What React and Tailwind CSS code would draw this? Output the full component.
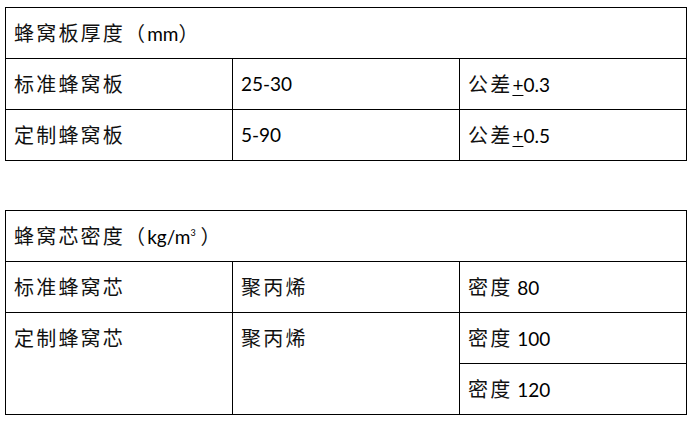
import React from 'react'

const FONT = "font-['Lato','Noto_Sans_CJK_SC',sans-serif]"

// CJK run — the source font sets Chinese wide and light
function Zh({ children }) {
  return <span className="text-[20px] tracking-[2.2px] text-[#111]">{children}</span>
}

function Cell({ children, top = false, span, rowSpan }) {
  return (
    <td
      colSpan={span}
      rowSpan={rowSpan}
      className={`border border-black pl-[8px] h-[51px] ${top ? 'align-top pt-[10px]' : 'align-middle'}`}
    >
      {children}
    </td>
  )
}

export default function App() {
  return (
    <div className={`w-[695px] h-[422px] bg-white text-black text-[19px] ${FONT}`}>
      <div className="pl-[5px] pt-[7px]">
        {/* ── 蜂窝板厚度 ───────────────────────────── */}
        <table className="border-collapse table-fixed w-[681px]">
          <colgroup>
            <col className="w-[227px]" />
            <col className="w-[227px]" />
            <col className="w-[227px]" />
          </colgroup>
          <tbody>
            <tr>
              <Cell span={3}><Zh>蜂窝板厚度（</Zh>mm<Zh>）</Zh></Cell>
            </tr>
            <tr>
              <Cell><Zh>标准蜂窝板</Zh></Cell>
              <Cell>25-30</Cell>
              <Cell><Zh>公差</Zh><span className="underline underline-offset-[3px]">+</span>0.3</Cell>
            </tr>
            <tr>
              <Cell><Zh>定制蜂窝板</Zh></Cell>
              <Cell>5-90</Cell>
              <Cell><Zh>公差</Zh><span className="underline underline-offset-[3px]">+</span>0.5</Cell>
            </tr>
          </tbody>
        </table>

        {/* ── 蜂窝芯密度 ───────────────────────────── */}
        <table className="border-collapse table-fixed w-[681px] mt-[49px]">
          <colgroup>
            <col className="w-[227px]" />
            <col className="w-[227px]" />
            <col className="w-[227px]" />
          </colgroup>
          <tbody>
            <tr>
              <Cell span={3}>
                <Zh>蜂窝芯密度（</Zh>kg/m<sup className="text-[9px] -top-[8px]">3</sup> <Zh>）</Zh>
              </Cell>
            </tr>
            <tr>
              <Cell><Zh>标准蜂窝芯</Zh></Cell>
              <Cell><Zh>聚丙烯</Zh></Cell>
              <Cell><Zh>密度</Zh> 80</Cell>
            </tr>
            <tr>
              <Cell top rowSpan={2}><Zh>定制蜂窝芯</Zh></Cell>
              <Cell top rowSpan={2}><Zh>聚丙烯</Zh></Cell>
              <Cell><Zh>密度</Zh> 100</Cell>
            </tr>
            <tr>
              <Cell><Zh>密度</Zh> 120</Cell>
            </tr>
          </tbody>
        </table>
      </div>
    </div>
  )
}
